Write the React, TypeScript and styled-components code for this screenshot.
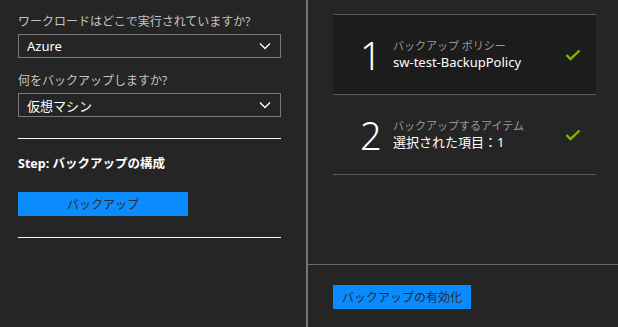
import React from 'react';
import styled, { createGlobalStyle } from 'styled-components';

const GlobalStyle = createGlobalStyle`
	html, body {
		margin: 0;
		padding: 0;
		background: #252525;
	}
	body {
		font-family: "Noto Sans", "Noto Sans CJK JP", sans-serif;
		color: #fff;
	}
	* {
		box-sizing: border-box;
	}
`;

interface IStep {
	num: number;
	label: string;
	value: string;
	active?: boolean;
}

const steps: IStep[] = [
	{ num: 1, label: 'バックアップ ポリシー', value: 'sw-test-BackupPolicy', active: true },
	{ num: 2, label: 'バックアップするアイテム', value: '選択された項目：1' },
];

const Chevron = () => (
	<svg width="12" height="8" viewBox="0 0 12 8">
		<polyline points="1,1.5 6,6.5 11,1.5" fill="none" stroke="#fff" strokeWidth="1.3" />
	</svg>
);

const Check = () => (
	<svg width="16" height="12" viewBox="0 0 16 12">
		<polyline points="1.5,6 5.5,10 14.5,1.5" fill="none" stroke="#7fba00" strokeWidth="2.4" />
	</svg>
);

export default function App() {
	return (
		<Page>
			<GlobalStyle />
			<LeftPane>
				<Label>ワークロードはどこで実行されていますか?</Label>
				<Select>
					<span>Azure</span>
					<Chevron />
				</Select>
				<Label>何をバックアップしますか?</Label>
				<Select>
					<span>仮想マシン</span>
					<Chevron />
				</Select>
				<Rule />
				<StepTitle>Step: バックアップの構成</StepTitle>
				<PrimaryButton width={170}>バックアップ</PrimaryButton>
				<Rule />
			</LeftPane>
			<Divider />
			<RightPane>
				<StepList>
					{steps.map(s => (
						<StepCard key={s.num} active={s.active}>
							<StepNum>{s.num}</StepNum>
							<StepText>
								<StepLabel>{s.label}</StepLabel>
								<StepValue>{s.value}</StepValue>
							</StepText>
							<Check />
						</StepCard>
					))}
				</StepList>
				<Footer>
					<PrimaryButton width={138}>バックアップの有効化</PrimaryButton>
				</Footer>
			</RightPane>
		</Page>
	);
}

/**
 * Styled Components...
 */
const Page = styled.div`
	display: flex;
	width: 618px;
	height: 327px;
	background: #252525;
	overflow: hidden;
`;
const LeftPane = styled.div`
	width: 306px;
	padding: 14px 25px 0 18px;
	display: flex;
	flex-direction: column;
`;
const Label = styled.div`
	font-size: 12px;
	line-height: 16px;
	color: #c4c4c4;
	margin-bottom: 4px;
	&:not(:first-child) {
		margin-top: 15px;
	}
`;
const Select = styled.div`
	height: 24px;
	border: 1px solid #7a7a7a;
	display: flex;
	align-items: center;
	justify-content: space-between;
	padding: 0 9px 0 8px;
	font-size: 13px;
	color: #fff;
`;
const Rule = styled.div`
	height: 1px;
	background: #f2f2f2;
	margin-top: 21px;
`;
const StepTitle = styled.div`
	font-size: 12.5px;
	font-weight: bold;
	line-height: 16px;
	margin-top: 17px;
	margin-bottom: 20px;
`;
const PrimaryButton = styled.div<{ width: number }>`
	width: ${p => p.width}px;
	height: 24px;
	background: #0a8cff;
	color: #2b2b2b;
	font-size: 12px;
	display: flex;
	align-items: center;
	justify-content: center;
`;
const Divider = styled.div`
	width: 2px;
	flex-shrink: 0;
	background: #767676;
`;
const RightPane = styled.div`
	flex: 1;
	display: flex;
	flex-direction: column;
`;
const StepList = styled.div`
	flex: 1;
	padding: 14px 22px 0 25px;
`;
const StepCard = styled.div<{ active?: boolean }>`
	height: 80px;
	display: flex;
	align-items: center;
	padding: 0 15px 0 27px;
	background: ${p => (p.active ? '#1c1c1c' : 'transparent')};
	border-top: 1px solid #5a5a5a;
	&:last-child {
		height: 81px;
		border-bottom: 1px solid #5a5a5a;
	}
`;
const StepNum = styled.div`
	font-size: 38px;
	font-weight: 300;
	width: 33px;
	line-height: 40px;
	color: #fff;
`;
const StepText = styled.div`
	flex: 1;
	display: flex;
	flex-direction: column;
`;
const StepLabel = styled.div`
	font-size: 11px;
	line-height: 14px;
	color: #9a9a9a;
`;
const StepValue = styled.div`
	font-size: 13px;
	line-height: 18px;
	color: #fff;
`;
const Footer = styled.div`
	height: 63px;
	border-top: 1px solid #6a6a6a;
	padding: 20px 25px 0;
`;
